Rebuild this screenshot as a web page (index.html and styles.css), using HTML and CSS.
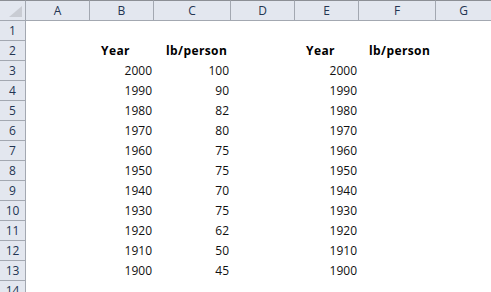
FILE: index.html
```html
<!DOCTYPE html>
<html lang="en">
<head>
  <meta charset="UTF-8" />
  <title>Sheet1</title>
  <link rel="stylesheet" href="styles.css">
</head>
<body>
  <div class="sheet">
    <div class="row head">
      <div class="corner"><svg width="13" height="11" viewBox="0 0 13 11"><polygon points="13,0 13,11 0,11" fill="#c9ccd3"/></svg></div>
      <div class="col-head">A</div><div class="col-head">B</div><div class="col-head">C</div><div class="col-head">D</div>
      <div class="col-head">E</div><div class="col-head">F</div><div class="col-head">G</div>
    </div>
    <div class="row"><div class="row-head">1</div><div></div><div></div><div></div><div></div><div></div><div></div><div></div></div>
    <div class="row">
      <div class="row-head">2</div><div></div>
      <div class="cell bold pad-b">Year</div><div class="cell bold pad-c">lb/person</div><div></div>
      <div class="cell bold pad-b">Year</div><div class="cell bold pad-f">lb/person</div><div></div>
    </div>
    <div class="row"><div class="row-head">3</div><div></div><div class="cell num">2000</div><div class="cell num">100</div><div></div><div class="cell num">2000</div><div></div><div></div></div>
    <div class="row"><div class="row-head">4</div><div></div><div class="cell num">1990</div><div class="cell num">90</div><div></div><div class="cell num">1990</div><div></div><div></div></div>
    <div class="row"><div class="row-head">5</div><div></div><div class="cell num">1980</div><div class="cell num">82</div><div></div><div class="cell num">1980</div><div></div><div></div></div>
    <div class="row"><div class="row-head">6</div><div></div><div class="cell num">1970</div><div class="cell num">80</div><div></div><div class="cell num">1970</div><div></div><div></div></div>
    <div class="row"><div class="row-head">7</div><div></div><div class="cell num">1960</div><div class="cell num">75</div><div></div><div class="cell num">1960</div><div></div><div></div></div>
    <div class="row"><div class="row-head">8</div><div></div><div class="cell num">1950</div><div class="cell num">75</div><div></div><div class="cell num">1950</div><div></div><div></div></div>
    <div class="row"><div class="row-head">9</div><div></div><div class="cell num">1940</div><div class="cell num">70</div><div></div><div class="cell num">1940</div><div></div><div></div></div>
    <div class="row"><div class="row-head">10</div><div></div><div class="cell num">1930</div><div class="cell num">75</div><div></div><div class="cell num">1930</div><div></div><div></div></div>
    <div class="row"><div class="row-head">11</div><div></div><div class="cell num">1920</div><div class="cell num">62</div><div></div><div class="cell num">1920</div><div></div><div></div></div>
    <div class="row"><div class="row-head">12</div><div></div><div class="cell num">1910</div><div class="cell num">50</div><div></div><div class="cell num">1910</div><div></div><div></div></div>
    <div class="row"><div class="row-head">13</div><div></div><div class="cell num">1900</div><div class="cell num">45</div><div></div><div class="cell num">1900</div><div></div><div></div></div>
    <div class="row"><div class="row-head">14</div><div></div><div></div><div></div><div></div><div></div><div></div><div></div></div>
  </div>
</body>
</html>
```

FILE: styles.css
```css
* { box-sizing: border-box; }
html, body {
  margin: 0;
  background: #fff;
  overflow: hidden;
}
body {
  font-family: "Open Sans", "Noto Sans", Arial, sans-serif;
  font-size: 12px;
  color: #111;
}
.sheet {
  width: 491px;
}
.row {
  display: grid;
  grid-template-columns: 26px 64px 64px 77px 64px 64px 77px 1fr;
  height: 20px;
}
.row.head {
  height: 21px;
}
.corner, .col-head {
  background: #e3e7ef;
  border-top: 1px solid #8c8f95;
  border-bottom: 1px solid #a3a8b1;
  border-right: 1px solid #a3a8b1;
  line-height: 19px;
  text-align: center;
  color: #243552;
}
.corner {
  display: flex;
  align-items: flex-end;
  justify-content: flex-end;
  padding: 0 3px 3px 0;
}
.corner svg { display: block; }
.col-head:last-child {
  border-right: none;
}
.row-head {
  background: #e3e7ef;
  border-right: 1px solid #a3a8b1;
  border-bottom: 1px solid #a3a8b1;
  line-height: 19px;
  text-align: center;
  color: #243552;
}
.cell {
  line-height: 20px;
  white-space: nowrap;
}
.num {
  text-align: right;
  padding-right: 2px;
}
.bold {
  font-weight: 700;
  color: #000;
  letter-spacing: 0.4px;
}
.pad-b { padding-left: 11px; }
.pad-c { padding-left: 12px; }
.pad-f { padding-left: 10px; }
```
